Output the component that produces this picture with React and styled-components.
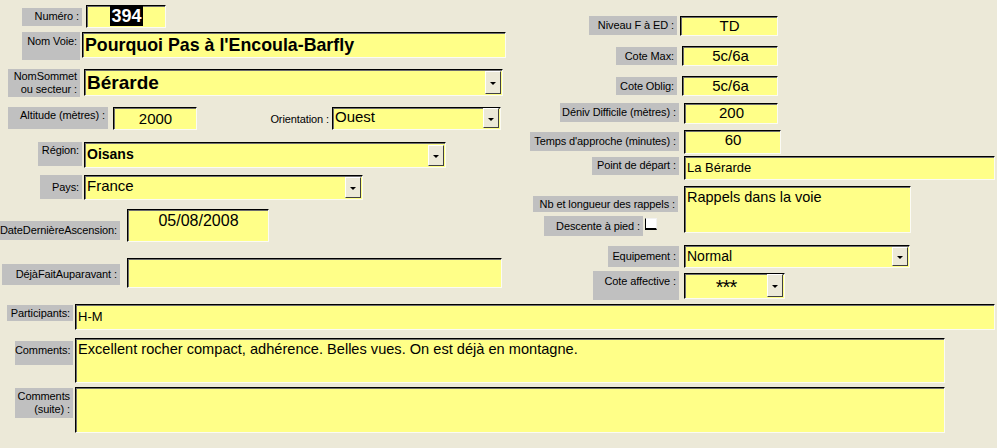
import React from "react";
import styled, { createGlobalStyle } from "styled-components";

const Global = createGlobalStyle`
  body {
    margin: 0;
    background: #ece9d8;
  }
`;

const Page = styled.div`
  width: 997px;
  height: 448px;
  overflow: hidden;
  background: #ece9d8;
  font-family: "Liberation Sans", Arial, sans-serif;
  color: #000;
`;

const Top = styled.div`
  display: flex;
  height: 297px;
`;

const LeftCol = styled.div`
  width: 520px;
  display: flex;
  flex-direction: column;
`;

const RightCol = styled.div`
  flex: 1;
  display: flex;
  flex-direction: column;
`;

const Bottom = styled.div`
  display: flex;
  flex-direction: column;
  margin-top: 7px;
`;

const Row = styled.div`
  display: flex;
  align-items: flex-start;
  margin-top: ${(p) => p.$mt || 0}px;
`;

const Stack = styled.div`
  width: 164px;
  display: flex;
  flex-direction: column;
`;

const Label = styled.div`
  box-sizing: border-box;
  width: ${(p) => p.$w}px;
  height: ${(p) => p.$h}px;
  margin-left: ${(p) => p.$ml || 0}px;
  margin-top: ${(p) => p.$mt || 0}px;
  padding: ${(p) => (p.$pt === undefined ? 3 : p.$pt)}px 3px 0 0;
  background: ${(p) => (p.$plain ? "transparent" : "#c0c0c0")};
  font-size: 11px;
  line-height: 13px;
  letter-spacing: -0.1px;
  text-align: right;
  white-space: pre;
  flex-shrink: 0;
`;

const Field = styled.div`
  box-sizing: border-box;
  display: flex;
  align-items: flex-start;
  width: ${(p) => p.$w}px;
  height: ${(p) => p.$h}px;
  margin-left: ${(p) => p.$ml || 0}px;
  margin-top: ${(p) => p.$mt || 0}px;
  padding: ${(p) => p.$pt || 0}px 1px 1px 2px;
  background: #ffff88;
  border-top: 1px solid #000;
  border-left: 1px solid #000;
  border-right: 1px solid #fbfbf4;
  border-bottom: 1px solid #fbfbf4;
  box-shadow: inset 1px 1px 0 #6e6e6e;
  font-size: ${(p) => p.$size || 15}px;
  font-weight: ${(p) => (p.$bold ? 700 : 400)};
  line-height: ${(p) => p.$lh || 18}px;
  white-space: nowrap;
  overflow: hidden;
  flex-shrink: 0;
`;

const Value = styled.div`
  flex: 1;
  text-align: ${(p) => p.$align || "left"};
  padding-top: ${(p) => p.$pt || 0}px;
`;

const Selected = styled.span`
  background: #000;
  color: #fff;
  padding: 0 1px;
`;

const DropButton = styled.div`
  box-sizing: border-box;
  width: 16px;
  align-self: stretch;
  margin: 0 0 0 2px;
  background: #ece9d8;
  border-top: 1px solid #fff;
  border-left: 1px solid #fff;
  border-right: 1px solid #404040;
  border-bottom: 1px solid #404040;
  display: flex;
  align-items: center;
  justify-content: center;
  flex-shrink: 0;
`;

const Arrow = styled.span`
  width: 0;
  height: 0;
  border-left: 3px solid transparent;
  border-right: 3px solid transparent;
  border-top: 3px solid #000;
  margin-top: 2px;
`;

const Check = styled.div`
  box-sizing: border-box;
  width: 12px;
  height: 12px;
  margin: 2px 0 0 2px;
  background: #fff;
  border-left: 1px solid #000;
  border-bottom: 2px solid #000;
  border-top: 1px solid #f2f2f2;
  border-right: 1px solid #f2f2f2;
`;

const Stars = styled.span`
  display: inline-block;
  font-size: 20px;
  line-height: 14px;
  font-weight: 400;
  letter-spacing: -1px;
  transform: translateY(4px);
`;

const Combo = ({ children, align, vpt, ...rest }) => (
  <Field {...rest}>
    <Value $align={align} $pt={vpt}>
      {children}
    </Value>
    <DropButton>
      <Arrow />
    </DropButton>
  </Field>
);

export default function App() {
  return (
    <Page>
      <Global />
      <Top>
        <LeftCol>
          <Row $mt={5}>
            <Label $ml={22} $w={60} $h={18} $mt={3} $pt={2}>
              Numéro :
            </Label>
            <Field $ml={4} $w={80} $h={23} $size={18} $bold $lh={20}>
              <Value $align="center">
                <Selected>394</Selected>
              </Value>
            </Field>
          </Row>
          <Row $mt={4}>
            <Label $ml={22} $w={58} $h={28} $pt={3}>
              Nom Voie:
            </Label>
            <Field $ml={2} $w={424} $h={26} $size={17.8} $bold $lh={22} $pt={1}>
              <Value>Pourquoi Pas à l'Encoula-Barfly</Value>
            </Field>
          </Row>
          <Row $mt={9}>
            <Label $ml={8} $w={72} $h={28} $pt={1}>
              {"NomSommet\nou secteur :"}
            </Label>
            <Combo $ml={4} $w={419} $h={27} $size={19} $bold $lh={23} $pt={1}>
              Bérarde
            </Combo>
          </Row>
          <Row $mt={10}>
            <Label $ml={8} $w={100} $h={22} $pt={2}>
              Altitude (mètres) :
            </Label>
            <Field $ml={5} $w={84} $h={23} $size={15} $pt={2}>
              <Value $align="center">2000</Value>
            </Field>
            <Label $plain $ml={60} $w={75} $h={22} $pt={6}>
              Orientation :
            </Label>
            <Combo $ml={0} $w={169} $h={23} $size={15} $pt={0}>
              Ouest
            </Combo>
          </Row>
          <Row $mt={12}>
            <Label $ml={38} $w={44} $h={24} $pt={2}>
              Région:
            </Label>
            <Combo $ml={2} $w={362} $h={26} $size={14} $bold $pt={2}>
              Oisans
            </Combo>
          </Row>
          <Row $mt={7}>
            <Label $ml={40} $w={42} $h={24} $pt={6}>
              Pays:
            </Label>
            <Combo $ml={2} $w={279} $h={25} $size={15} $pt={1}>
              France
            </Combo>
          </Row>
          <Row $mt={9}>
            <Label $w={120} $h={19} $mt={12} $pt={3}>
              DateDernièreAscension:
            </Label>
            <Field $ml={7} $w={142} $h={33} $size={16} $pt={2}>
              <Value $align="center">05/08/2008</Value>
            </Field>
          </Row>
          <Row $mt={16}>
            <Label $ml={2} $w={118} $h={21} $mt={6} $pt={4}>
              DéjàFaitAuparavant :
            </Label>
            <Field $ml={7} $w={375} $h={30} />
          </Row>
        </LeftCol>

        <RightCol>
          <Row $mt={16}>
            <Label $ml={69} $w={88} $h={19} $pt={3}>
              Niveau F à ED :
            </Label>
            <Field $ml={3} $w={98} $h={20} $size={15}>
              <Value $align="center">TD</Value>
            </Field>
          </Row>
          <Row $mt={10}>
            <Label $ml={96} $w={61} $h={18} $mt={1} $pt={3}>
              Cote Max:
            </Label>
            <Field $ml={5} $w={96} $h={20} $size={15}>
              <Value $align="center">5c/6a</Value>
            </Field>
          </Row>
          <Row $mt={10}>
            <Label $ml={96} $w={61} $h={18} $mt={1} $pt={3}>
              Cote Oblig:
            </Label>
            <Field $ml={5} $w={96} $h={20} $size={15}>
              <Value $align="center">5c/6a</Value>
            </Field>
          </Row>
          <Row $mt={7}>
            <Label $ml={40} $w={119} $h={19} $pt={3}>
              Déniv Difficile (mètres) :
            </Label>
            <Field $ml={5} $w={94} $h={21} $size={15}>
              <Value $align="center">200</Value>
            </Field>
          </Row>
          <Row $mt={6}>
            <Label $ml={10} $w={149} $h={19} $mt={2} $pt={3}>
              Temps d'approche (minutes) :
            </Label>
            <Field $ml={5} $w={97} $h={24} $size={15}>
              <Value $align="center">60</Value>
            </Field>
          </Row>
          <Row $mt={2}>
            <Label $ml={72} $w={87} $h={18} $mt={1} $pt={2}>
              Point de départ :
            </Label>
            <Field $ml={5} $w={311} $h={24} $size={13} $pt={2}>
              <Value>La Bérarde</Value>
            </Field>
          </Row>
          <Row $mt={6}>
            <Stack>
              <Label $ml={13} $w={145} $h={16} $mt={10} $pt={2}>
                Nb et longueur des rappels :
              </Label>
              <Row $mt={4}>
                <Label $ml={24} $w={99} $h={20} $pt={4}>
                  Descente à pied :
                </Label>
                <Check />
              </Row>
            </Stack>
            <Field $w={227} $h={47} $size={14.5} $pt={1}>
              <Value>Rappels dans la voie</Value>
            </Field>
          </Row>
          <Row $mt={9}>
            <Label $ml={88} $w={71} $h={21} $mt={1} $pt={4}>
              Equipement :
            </Label>
            <Combo $ml={5} $w={226} $h={23} $size={14} $pt={1}>
              Normal
            </Combo>
          </Row>
          <Row $mt={3}>
            <Label $ml={73} $w={86} $h={29} $pt={4}>
              Cote affective :
            </Label>
            <Combo $ml={5} $mt={2} $w={101} $h={26} align="center" vpt={2}>
              <Stars>***</Stars>
            </Combo>
          </Row>
        </RightCol>
      </Top>

      <Bottom>
        <Row>
          <Label $ml={7} $w={66} $h={16} $mt={1} $pt={2}>
            Participants:
          </Label>
          <Field $ml={2} $w={920} $h={26} $size={13} $pt={3}>
            <Value>H-M</Value>
          </Field>
        </Row>
        <Row $mt={8}>
          <Label $ml={15} $w={58} $h={24} $mt={3} $pt={3}>
            Comments:
          </Label>
          <Field $ml={2} $w={870} $h={45} $size={14.6} $pt={1}>
            <Value>
              Excellent rocher compact, adhérence. Belles vues. On est déjà en
              montagne.
            </Value>
          </Field>
        </Row>
        <Row $mt={4}>
          <Label $ml={15} $w={58} $h={30} $mt={1} $pt={2}>
            {"Comments\n(suite) :"}
          </Label>
          <Field $ml={2} $w={870} $h={46} />
        </Row>
      </Bottom>
    </Page>
  );
}
